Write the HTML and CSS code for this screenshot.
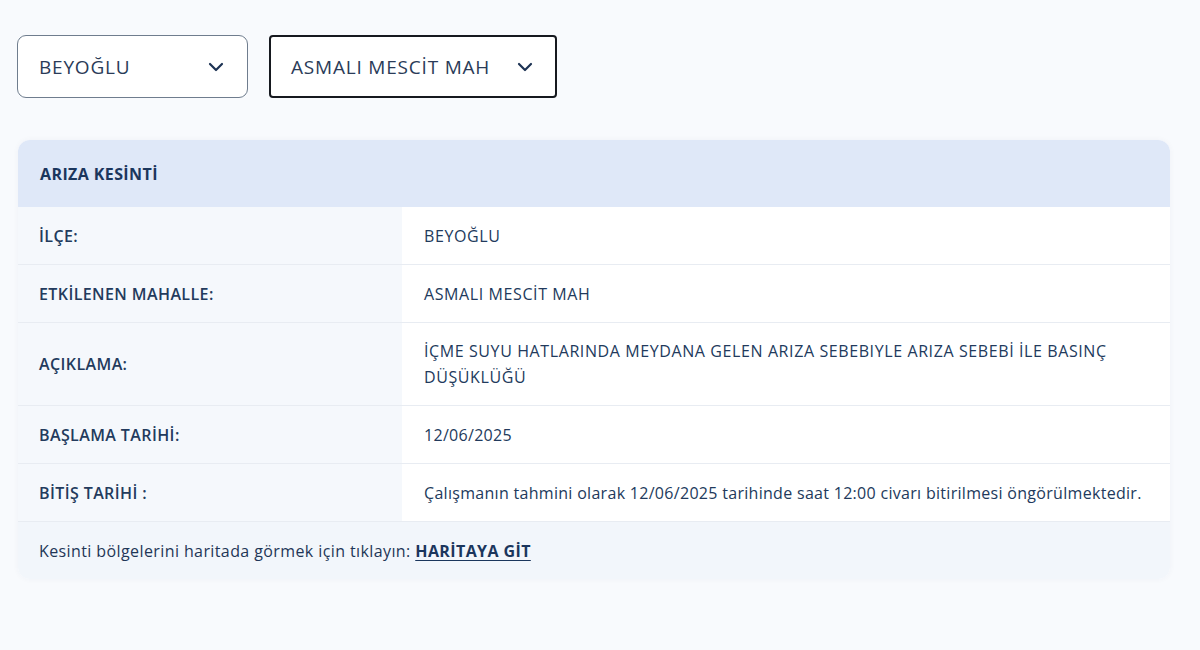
FILE: index.html
```html
<!DOCTYPE html>
<html lang="tr">
<head>
<meta charset="utf-8">
<title>Arıza Kesinti</title>
<link rel="stylesheet" href="styles.css">
</head>
<body>
<div class="page">
  <div class="filters">
    <div class="select select-district">
      <span class="select-text">BEYOĞLU</span>
      <svg class="chevron" viewBox="0 0 20 20" width="20" height="20"><path d="M4 7l6 6 6-6" fill="none" stroke="#1d3354" stroke-width="2.2" stroke-linecap="round" stroke-linejoin="round"/></svg>
    </div>
    <div class="select select-hood">
      <span class="select-text">ASMALI MESCİT MAH</span>
      <svg class="chevron" viewBox="0 0 20 20" width="20" height="20"><path d="M4 7l6 6 6-6" fill="none" stroke="#1d3354" stroke-width="2.2" stroke-linecap="round" stroke-linejoin="round"/></svg>
    </div>
  </div>

  <div class="card">
    <div class="card-head">ARIZA KESİNTİ</div>
    <div class="row">
      <div class="label">İLÇE:</div>
      <div class="value value-caps">BEYOĞLU</div>
    </div>
    <div class="row">
      <div class="label">ETKİLENEN MAHALLE:</div>
      <div class="value value-caps">ASMALI MESCİT MAH</div>
    </div>
    <div class="row row-tall">
      <div class="label">AÇIKLAMA:</div>
      <div class="value value-caps">İÇME SUYU HATLARINDA MEYDANA GELEN ARIZA SEBEBIYLE ARIZA SEBEBİ İLE BASINÇ DÜŞÜKLÜĞÜ</div>
    </div>
    <div class="row">
      <div class="label">BAŞLAMA TARİHİ:</div>
      <div class="value">12/06/2025</div>
    </div>
    <div class="row">
      <div class="label">BİTİŞ TARİHİ :</div>
      <div class="value">Çalışmanın tahmini olarak 12/06/2025 tarihinde saat 12:00 civarı bitirilmesi öngörülmektedir.</div>
    </div>
    <div class="card-foot">Kesinti bölgelerini haritada görmek için tıklayın: <a href="#" class="map-link">HARİTAYA GİT</a></div>
  </div>
</div>
</body>
</html>
```

FILE: styles.css
```css
* { box-sizing: border-box; }

html, body {
  margin: 0;
  padding: 0;
}

body {
  background: #f8fafd;
  font-family: "Open Sans", Lato, sans-serif;
  color: #1d3354;
  width: 1200px;
  height: 650px;
  overflow: hidden;
}

.page {
  padding: 35px 30px 0 17px;
}

.filters {
  display: flex;
  gap: 21px;
}

.select {
  height: 63px;
  display: flex;
  align-items: center;
  justify-content: space-between;
  background: #ffffff;
  font-size: 19px;
  letter-spacing: 0.8px;
  color: #2a3b58;
}

.select-district {
  width: 231px;
  border: 1px solid #6f7d8e;
  border-radius: 9px;
  padding: 0 21px 0 21px;
}

.select-hood {
  width: 288px;
  border: 2px solid #16191f;
  border-radius: 4px;
  padding: 0 20px 0 20px;
}

.chevron { display: block; }

.card {
  margin-top: 42px;
  margin-left: 1px;
  width: 1152px;
  border-radius: 12px;
  overflow: hidden;
  background: #ffffff;
  box-shadow: 0 0 6px rgba(30, 60, 110, 0.04);
}

.card-head {
  height: 67px;
  background: #dfe8f8;
  display: flex;
  align-items: center;
  padding-left: 22px;
  font-weight: 700;
  font-size: 16px;
  letter-spacing: 0.4px;
  color: #1b365d;
}

.row {
  display: grid;
  grid-template-columns: 384px 1fr;
  min-height: 58px;
  border-bottom: 1px solid #e8ecf2;
}

.row-tall { min-height: 83px; }

.label {
  background: #f5f8fc;
  display: flex;
  align-items: center;
  padding-left: 21px;
  font-size: 16px;
  font-weight: 600;
  letter-spacing: 0.4px;
  color: #233b5d;
}

.value {
  display: flex;
  align-items: center;
  padding: 0 10px 0 22px;
  font-size: 16px;
  letter-spacing: 0.3px;
  line-height: 26px;
  color: #223a5c;
}

.value-caps { letter-spacing: 0.6px; }

.card-foot {
  height: 57px;
  background: #f2f6fb;
  display: flex;
  align-items: center;
  padding-left: 21px;
  font-size: 16px;
  letter-spacing: 0.4px;
  color: #1f3657;
  white-space: pre;
}

.map-link {
  color: #1b365d;
  font-weight: 700;
  text-decoration: underline;
  text-underline-offset: 3px;
}
```
